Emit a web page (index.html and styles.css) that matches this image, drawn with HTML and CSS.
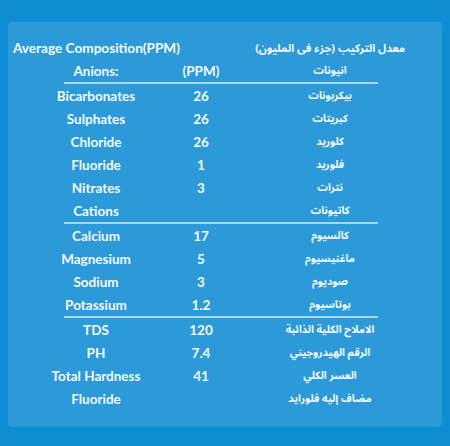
FILE: index.html
```html
<!DOCTYPE html>
<html>
<head>
<title>Average Composition</title>
<meta name="viewport" content="width=device-width, initial-scale=1.0">
<link rel="stylesheet" href="styles.css">
</head>
<body>

<div class=card>
 <div class=head>
  <span class=en>Average Composition(PPM)</span>
  <span class=ar dir=rtl>معدل التركيب (جزء فى المليون)</span>
 </div>

 <div class=tbl>
  <div class="c1 top">Anions:</div><div class="c2 top">(PPM)</div><div class="c3 top">انيونات</div>
  <div class=line></div>
  <div class=c1>Bicarbonates</div><div class=c2>26</div><div class=c3>بيكربونات</div>
  <div class=c1>Sulphates</div><div class=c2>26</div><div class=c3>كبريتات</div>
  <div class=c1>Chloride</div><div class=c2>26</div><div class=c3>كلوريد</div>
  <div class=c1>Fluoride</div><div class=c2>1</div><div class=c3>فلوريد</div>
  <div class=c1>Nitrates</div><div class=c2>3</div><div class=c3>نترات</div>
  <div class=c1>Cations</div><div class=c2></div><div class=c3>كاتيونات</div>
  <div class=line></div>
  <div class=c1>Calcium</div><div class=c2>17</div><div class=c3>كالسيوم</div>
  <div class=c1>Magnesium</div><div class=c2>5</div><div class=c3>ماغنيسيوم</div>
  <div class=c1>Sodium</div><div class=c2>3</div><div class=c3>صوديوم</div>
  <div class=c1>Potassium</div><div class=c2>1.2</div><div class=c3>بوتاسيوم</div>
  <div class=line></div>
  <div class=c1>TDS</div><div class=c2>120</div><div class=c3>الاملاح الكلية الذائبة</div>
  <div class=c1>PH</div><div class=c2>7.4</div><div class=c3>الرقم الهيدروجيني</div>
  <div class=c1>Total Hardness</div><div class=c2>41</div><div class=c3>العسر الكلي</div>
  <div class=c1>Fluoride</div><div class=c2></div><div class=c3>مضاف إليه فلورايد</div>
 </div>
</div>

</body>
</html>
```

FILE: styles.css
```css
html, body {
 margin:0;
 padding:0;
}
body {
 background-color:#0e8dd4;
 padding:22px 8px 19px 8px;
 font-family:Lato, "Noto Sans", sans-serif;
 font-weight:bold;
 color:#f4f9fd;
}
.card {
 background-color:#2c9ad8;
 border-radius:4px;
 padding:14px 0 17px 0;
 height:374px;
}
.head {
 display:flex;
 justify-content:space-between;
 align-items:center;
 height:24px;
 padding:0 37px 0 5px;
 font-size:13.6px;
}
.ar, .c3 {
 font-family:"Noto Sans Arabic", "Noto Kufi Arabic", "DejaVu Sans", sans-serif;
}
.head .ar {
 font-size:11px;
}
.tbl {
 display:grid;
 grid-template-columns:112px 98px 160px;
 padding-left:32px;
 font-size:13.5px;
}
.tbl > div {
 display:flex;
 align-items:center;
 justify-content:center;
 height:23px;
}
.tbl > .top {
 height:22px;
}
.c3 {
 direction:rtl;
 font-size:10.5px;
}
.tbl > .line {
 grid-column:1 / -1;
 height:2px;
 margin-left:24px;
 width:314px;
 background-color:rgba(255,255,255,0.62);
}
```
